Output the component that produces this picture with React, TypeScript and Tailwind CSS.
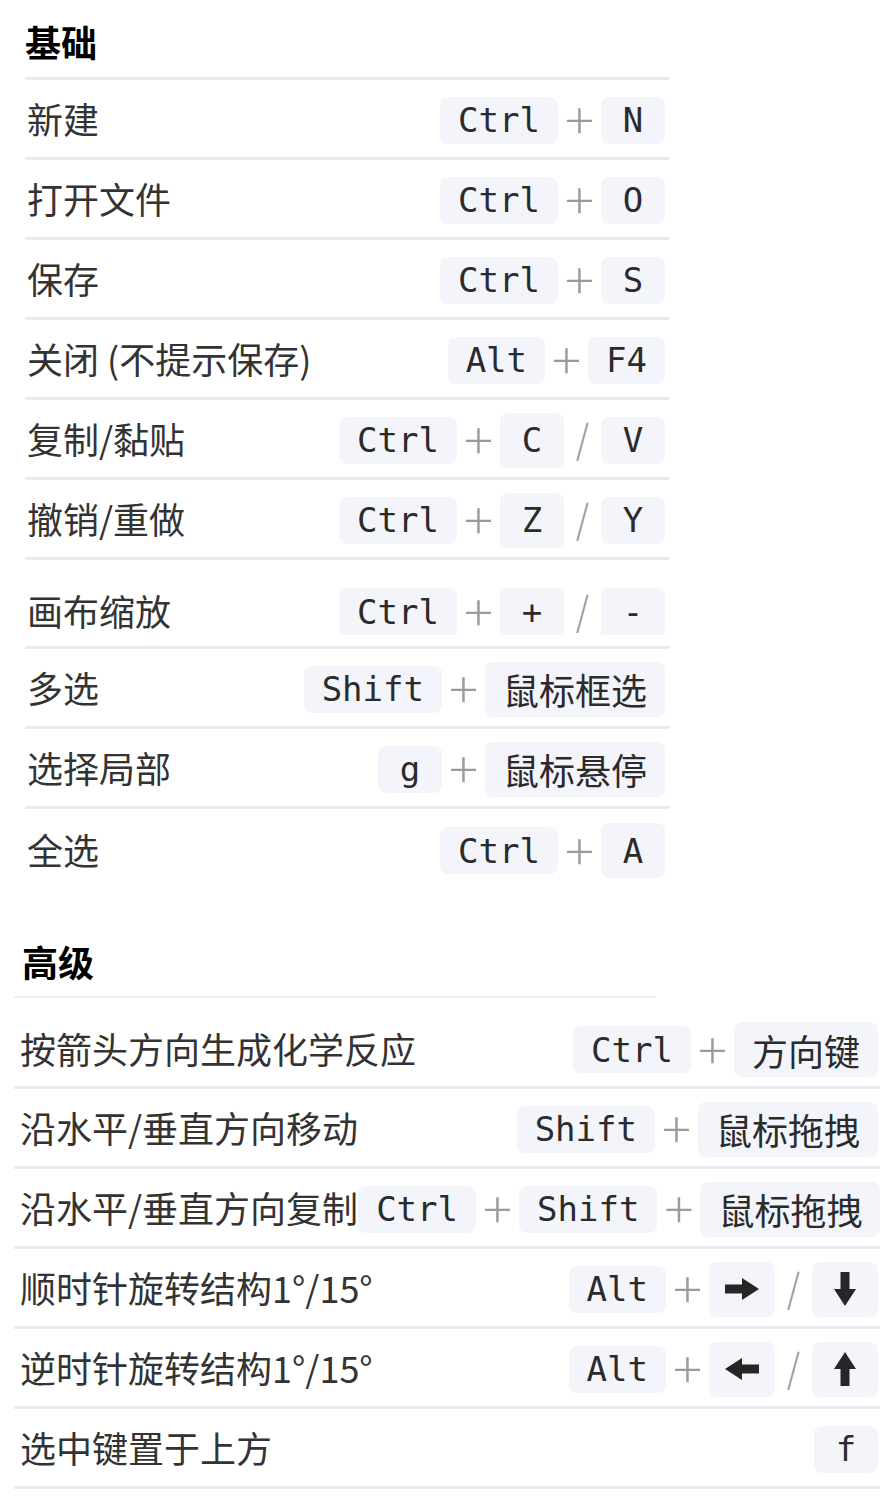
import React from "react";
import clsx from "clsx";

type Arrow = "R" | "D" | "L" | "U";

interface RowData {
  label: string;
  keys: string[];
  tall?: number[]; // indexes of keys that render taller
  flat?: boolean;
  first?: boolean;
  last?: boolean;
}

const basics: RowData[] = [
  { label: "新建", keys: ["Ctrl", "+", "N"] },
  { label: "打开文件", keys: ["Ctrl", "+", "O"] },
  { label: "保存", keys: ["Ctrl", "+", "S"] },
  { label: "关闭 (不提示保存)", keys: ["Alt", "+", "F4"] },
  { label: "复制/黏贴", keys: ["Ctrl", "+", "C", "/", "V"], tall: [2] },
  { label: "撤销/重做", keys: ["Ctrl", "+", "Z", "/", "Y"], tall: [2] },
  { label: "画布缩放", keys: ["Ctrl", "+", "+", "/", "-"], flat: true },
  { label: "多选", keys: ["Shift", "+", "鼠标框选"] },
  { label: "选择局部", keys: ["g", "+", "鼠标悬停"] },
  { label: "全选", keys: ["Ctrl", "+", "A"], tall: [2], last: true },
];

const advanced: RowData[] = [
  { label: "按箭头方向生成化学反应", keys: ["Ctrl", "+", "方向键"], first: true },
  { label: "沿水平/垂直方向移动", keys: ["Shift", "+", "鼠标拖拽"] },
  { label: "沿水平/垂直方向复制", keys: ["Ctrl", "+", "Shift", "+", "鼠标拖拽"] },
  { label: "顺时针旋转结构1°/15°", keys: ["Alt", "+", "→", "/", "↓"] },
  { label: "逆时针旋转结构1°/15°", keys: ["Alt", "+", "←", "/", "↑"] },
  { label: "选中键置于上方", keys: ["f"] },
];

const arrowMap: Record<string, Arrow> = { "→": "R", "↓": "D", "←": "L", "↑": "U" };

function ArrowIcon({ dir }: { dir: Arrow }) {
  const rot = { R: 0, D: 90, L: 180, U: 270 }[dir];
  return (
    <svg width="34" height="34" viewBox="0 0 34 34" aria-hidden>
      <path
        d="M0 12.5 H17 V6 L34 17 L17 28 V21.5 H0 Z"
        fill="#262626"
        transform={`rotate(${rot} 17 17)`}
      />
    </svg>
  );
}

function Key({ k, tall, flat }: { k: string; tall?: boolean; flat?: boolean }) {
  const arrow = arrowMap[k];
  const cjk = /[\u4e00-\u9fff]/.test(k);
  return (
    <span
      className={clsx(
        "shrink-0 whitespace-nowrap flex items-center justify-center min-w-[64px] bg-[#f4f4fb] text-[#2b2b2b] leading-none",
        flat ? "rounded-t-lg" : "rounded-lg",
        arrow ? "px-[16px] h-[55px]" : "px-[18px]",
        !arrow && (cjk || tall ? "h-[55px]" : "h-[47px]"),
        cjk
          ? "text-[36px] font-['Noto_Sans_CJK_SC',sans-serif]"
          : "text-[34px] font-['DejaVu_Sans_Mono',monospace]"
      )}
    >
      {arrow ? <ArrowIcon dir={arrow} /> : k}
    </span>
  );
}

function Sep({ s }: { s: string }) {
  return (
    <span
      className={clsx(
        "shrink-0 h-[40px] flex items-center justify-center leading-none font-extralight text-[#9b9b9b] font-['Inter',sans-serif]",
        s === "+" ? "w-[23px] text-[58px] -translate-y-[4px]" : "w-[17px] text-[44px]"
      )}
    >
      {s}
    </span>
  );
}

function Row({ row, advancedRow }: { row: RowData; advancedRow?: boolean }) {
  return (
    <div
      className={clsx(
        "flex items-center justify-between",
        !row.last && "border-b-[3px] border-[#ebebed]",
        advancedRow ? "pl-[6px] pr-[2px]" : "pl-[2px] pr-[5px]",
        row.flat ? "h-[89px] pt-[17px]" : row.first ? "h-[91px] pt-[15px]" : "h-[80px] pt-[3px]"
      )}
    >
      <span className="-translate-y-[2px] text-[36px] leading-none text-[#333] whitespace-nowrap font-['Noto_Sans_CJK_SC','Noto_Sans',sans-serif]">
        {row.label}
      </span>
      <div className="flex items-center gap-[10px]">
        {row.keys.map((k, i) =>
          (k === "+" || k === "/") && i % 2 === 1 ? (
            <Sep key={i} s={k} />
          ) : (
            <Key key={i} k={k} tall={row.tall?.includes(i)} flat={row.flat} />
          )
        )}
      </div>
    </div>
  );
}

export default function App() {
  return (
    <div className="w-[892px] h-[1502px] bg-white overflow-hidden">
      <section className="ml-[25px] w-[645px]">
        <h2 className="h-[80px] flex items-end pb-[18px] border-b-[3px] border-[#ebebed] text-[36px] leading-none font-bold text-black font-['Noto_Sans_CJK_SC',sans-serif]">
          基础
        </h2>
        {basics.map((r) => (
          <Row key={r.label} row={r} />
        ))}
      </section>
      <section className="ml-[14px] w-[866px]">
        <div className="w-[641px] h-[109px] flex items-end pb-[17px] pl-[8px] border-b-2 border-[#efeff1]">
          <h2 className="text-[36px] leading-none font-bold text-black font-['Noto_Sans_CJK_SC',sans-serif]">
            高级
          </h2>
        </div>
        {advanced.map((r) => (
          <Row key={r.label} row={r} advancedRow />
        ))}
      </section>
    </div>
  );
}
